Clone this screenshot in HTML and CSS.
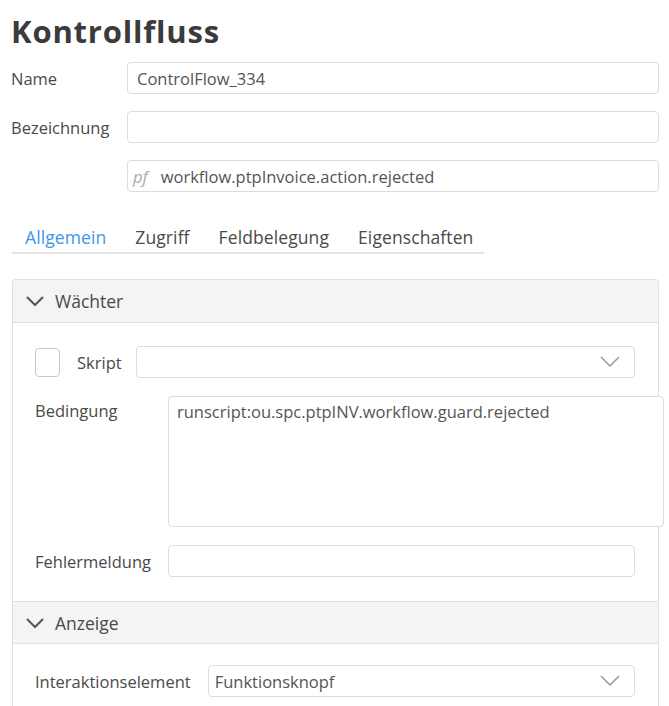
FILE: index.html
```html
<!DOCTYPE html>
<html lang="de">
<head>
    <meta charset="UTF-8">
    <meta name="viewport" content="width=device-width, initial-scale=1.0">
    <title>Kontrollfluss</title>
    <link rel="stylesheet" href="styles.css">
</head>
<body>
    <div class="page">
        <h1 class="title">Kontrollfluss</h1>

        <div class="form-grid">
            <label class="field-label">Name</label>
            <div class="input">ControlFlow_334</div>

            <label class="field-label">Bezeichnung</label>
            <div class="input"></div>

            <span></span>
            <div class="input"><span class="prefix">pf</span>workflow.ptpInvoice.action.rejected</div>
        </div>

        <div class="tabs">
            <span class="tab active">Allgemein</span>
            <span class="tab">Zugriff</span>
            <span class="tab">Feldbelegung</span>
            <span class="tab">Eigenschaften</span>
        </div>

        <div class="panel">
            <div class="panel-header">
                <svg class="chevron" width="20" height="12" viewBox="0 0 20 12"><path d="M2 2 L10 10 L18 2" fill="none" stroke="#555" stroke-width="2"/></svg>
                <span>Wächter</span>
            </div>
            <div class="panel-body">
                <div class="script-row">
                    <span class="checkbox"></span>
                    <label class="field-label">Skript</label>
                    <div class="input select">
                        <span></span>
                        <svg width="20" height="12" viewBox="0 0 20 12"><path d="M1 1 L10 10 L19 1" fill="none" stroke="#999" stroke-width="1.5"/></svg>
                    </div>
                </div>
                <div class="guard-grid">
                    <label class="field-label top">Bedingung</label>
                    <div class="input textarea">runscript:ou.spc.ptpINV.workflow.guard.rejected</div>

                    <label class="field-label">Fehlermeldung</label>
                    <div class="input short"></div>
                </div>
            </div>

            <div class="panel-header bordered">
                <svg class="chevron" width="20" height="12" viewBox="0 0 20 12"><path d="M2 2 L10 10 L18 2" fill="none" stroke="#555" stroke-width="2"/></svg>
                <span>Anzeige</span>
            </div>
            <div class="panel-body last">
                <div class="display-row">
                    <label class="field-label">Interaktionselement</label>
                    <div class="input select">
                        <span>Funktionsknopf</span>
                        <svg width="20" height="12" viewBox="0 0 20 12"><path d="M1 1 L10 10 L19 1" fill="none" stroke="#999" stroke-width="1.5"/></svg>
                    </div>
                </div>
            </div>
        </div>
    </div>
</body>
</html>
```

FILE: styles.css
```css
*{
    box-sizing: border-box;
    font-family: 'Open Sans', sans-serif;
}
body{
    margin: 0;
    padding: 0;
    background: #fff;
    color: #4a4a4a;
    overflow: hidden;
}

.page{
    padding: 11px 10px 0 11px;
}

.title{
    margin: 0;
    font-size: 31px;
    font-weight: 700;
    color: #3b3b3b;
    line-height: 41px;
    letter-spacing: 0.8px;
}

.form-grid{
    display: grid;
    grid-template-columns: 116px 1fr;
    row-gap: 17px;
    align-items: center;
    margin-top: 10px;
}

.field-label{
    font-size: 16.5px;
    color: #4a4a4a;
}
.field-label.top{
    align-self: start;
    padding-top: 3px;
}

.input{
    height: 32px;
    border: 1px solid #dcdcdc;
    border-radius: 4px;
    padding: 0 9px;
    display: flex;
    align-items: center;
    font-size: 16.5px;
    color: #555;
    background: #fff;
}

.prefix{
    font-style: italic;
    color: #aaa;
    margin-right: 13px;
    margin-left: -4px;
}

.tabs{
    display: flex;
    gap: 29px;
    width: 472px;
    margin: 33px 0 0 1px;
    padding: 0 0 3px 13px;
    border-bottom: 2px solid #e4e4e4;
}
.tab{
    font-size: 17.5px;
    line-height: 24px;
    color: #4a4a4a;
    letter-spacing: 0.1px;
}
.tab.active{
    color: #3b98ea;
}

.panel{
    margin: 25px 0 0 1px;
    border: 1px solid #e0e0e0;
    border-bottom: none;
    border-radius: 4px 4px 0 0;
}

.panel-header{
    height: 43px;
    background: #f4f4f4;
    border-bottom: 1px solid #e0e0e0;
    display: flex;
    align-items: center;
    gap: 10px;
    padding-left: 12px;
    font-size: 17.5px;
    color: #4a4a4a;
    border-radius: 4px 4px 0 0;
}
.panel-header.bordered{
    border-top: 1px solid #e0e0e0;
    border-radius: 0;
}

.panel-body{
    padding: 23px 23px 24px 22px;
}
.panel-body.last{
    padding-top: 21px;
    padding-bottom: 10px;
}

.script-row{
    display: flex;
    align-items: center;
}
.checkbox{
    width: 25px;
    height: 29px;
    border: 1px solid #c8c8c8;
    border-radius: 4px;
    margin-right: 17px;
}
.script-row .field-label{
    margin-right: 14px;
}
.script-row .select{
    flex: 1;
}

.select{
    justify-content: space-between;
    padding-right: 14px;
}

.guard-grid{
    display: grid;
    grid-template-columns: 133px 1fr;
    row-gap: 18px;
    align-items: center;
    margin-top: 18px;
}

.textarea{
    height: 131px;
    align-items: flex-start;
    padding-top: 3px;
    padding-left: 8px;
    margin-right: -29px;
}

.display-row{
    display: flex;
    align-items: center;
    gap: 17px;
}
.display-row .select{
    flex: 1;
    padding-left: 6px;
}
```
